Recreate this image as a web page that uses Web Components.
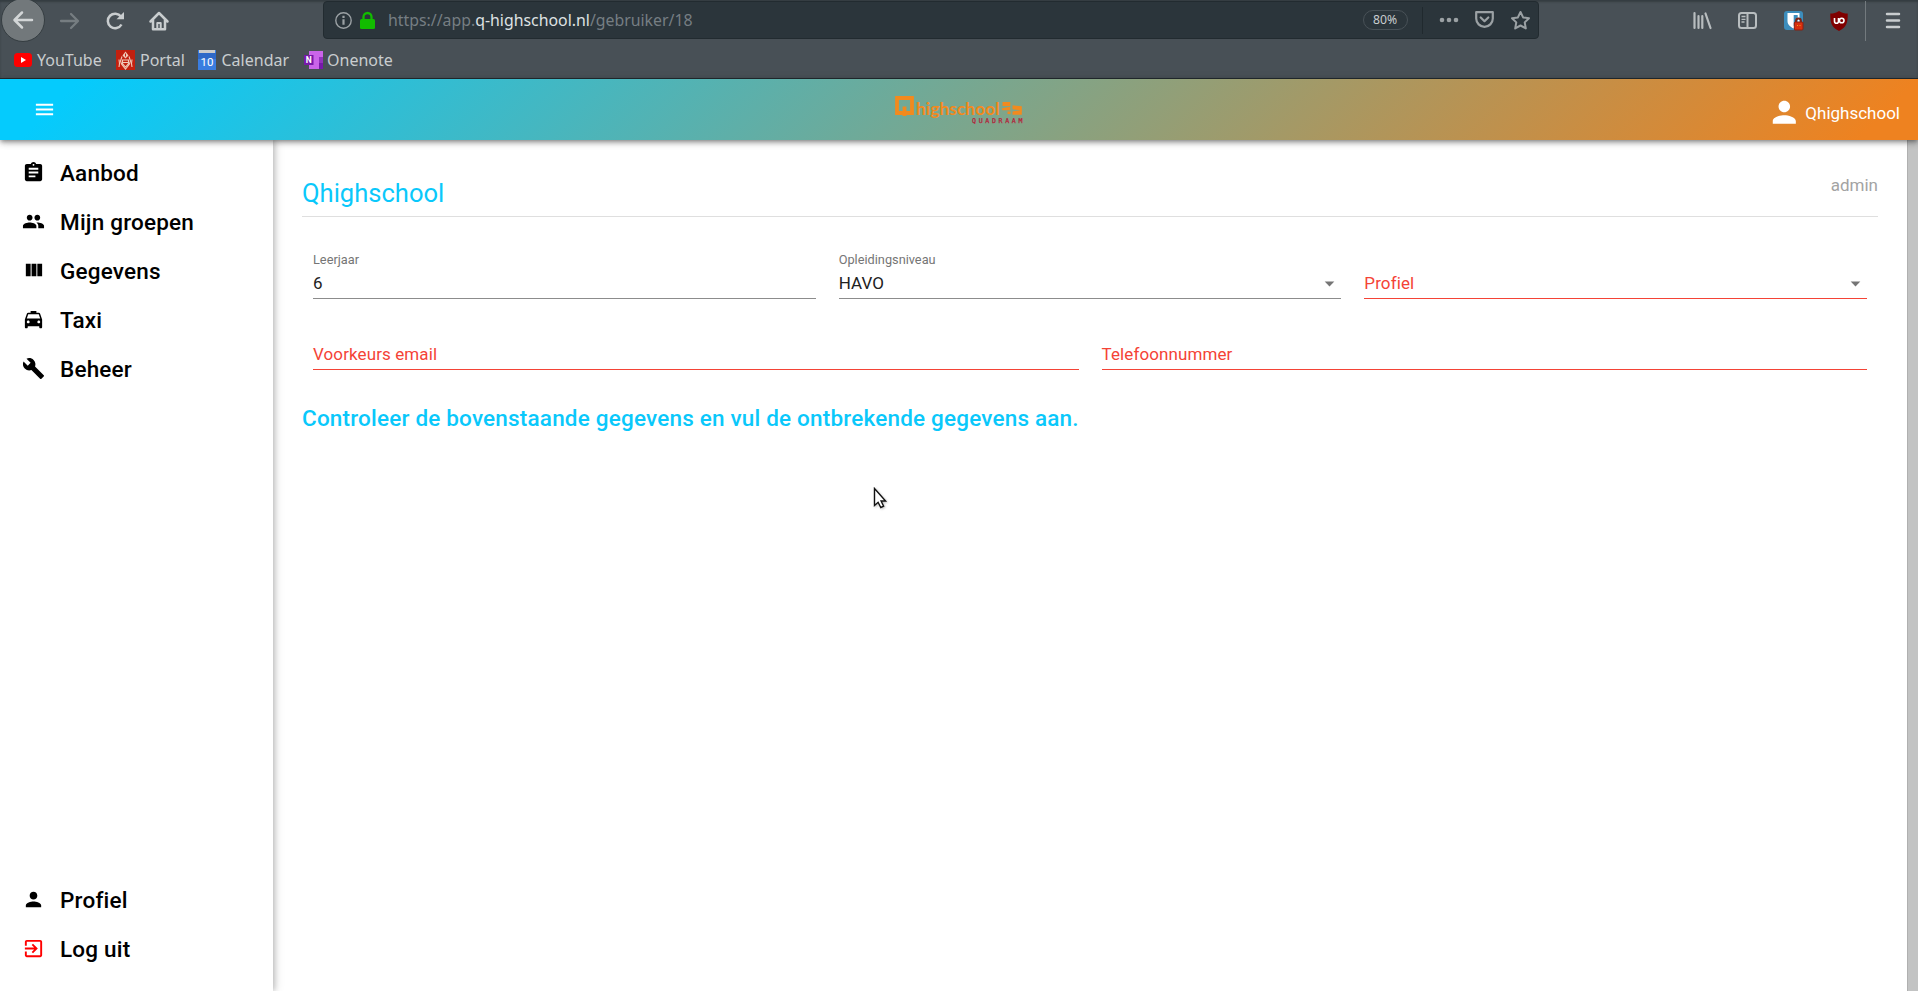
<!DOCTYPE html>
<html lang="nl">
<head>
<meta charset="utf-8">
<title>Qhighschool</title>
<style>
html,body{margin:0;height:100%;overflow:hidden;background:#fff}
body{font-family:Roboto,"Liberation Sans",sans-serif}
</style>
</head>
<body>
<qh-window></qh-window>
<script>
const define = (name, html) => customElements.define(name, class extends HTMLElement {
  connectedCallback() {
    if (this.shadowRoot) return;
    const t = document.createElement('template');
    t.innerHTML = typeof html === 'function' ? html(this) : html;
    this.attachShadow({mode: 'open'}).append(t.content.cloneNode(true));
  }
});

// Material glyphs on a 24-unit grid
const glyphs = {
  menu: 'M3 18h18v-2H3v2zm0-5h18v-2H3v2zm0-7v2h18V6H3z',
  person: 'M12 12c2.21 0 4-1.79 4-4s-1.79-4-4-4-4 1.79-4 4 1.79 4 4 4zm0 2c-2.67 0-8 1.34-8 4v2h16v-2c0-2.66-5.33-4-8-4z',
  assignment: 'M19 3h-4.18C14.4 1.84 13.3 1 12 1c-1.3 0-2.4.84-2.82 2H5c-1.1 0-2 .9-2 2v14c0 1.1.9 2 2 2h14c1.1 0 2-.9 2-2V5c0-1.1-.9-2-2-2zm-7 0c.55 0 1 .45 1 1s-.45 1-1 1-1-.45-1-1 .45-1 1-1zm2 14H7v-2h7v2zm3-4H7v-2h10v2zm0-4H7V7h10v2z',
  group: 'M16 11c1.66 0 2.99-1.34 2.99-3S17.66 5 16 5c-1.66 0-3 1.34-3 3s1.34 3 3 3zm-8 0c1.66 0 2.99-1.34 2.99-3S9.66 5 8 5C6.34 5 5 6.34 5 8s1.34 3 3 3zm0 2c-2.33 0-7 1.17-7 3.5V19h14v-2.500c0-2.330-4.670-3.500-7-3.500zm8 0c-.29 0-.62.020-.97.050 1.160.840 1.970 1.970 1.970 3.450V19h6v-2.500c0-2.330-4.670-3.500-7-3.500z',
  columns: 'M10 18h5V5h-5v13zm-6 0h5V5H4v13zM16 5v13h5V5h-5z',
  taxi: 'M18.920 6.010C18.720 5.420 18.160 5 17.500 5H15V3H9v2H6.500c-.66 0-1.210.420-1.420 1.010L3 12v8c0 .55.45 1 1 1h1c.55 0 1-.45 1-1v-1h12v1c0 .55.45 1 1 1h1c.55 0 1-.45 1-1v-8l-2.080-5.990zM6.500 16c-.83 0-1.500-.67-1.500-1.500S5.670 13 6.500 13s1.500.67 1.500 1.500S7.330 16 6.500 16zm11 0c-.83 0-1.500-.67-1.500-1.500s.67-1.500 1.500-1.500 1.500.67 1.500 1.500-.67 1.500-1.500 1.500zM5 11l1.500-4.500h11L19 11H5z',
  wrench: 'M22.700 19l-9.100-9.100c.9-2.300.4-5-1.500-6.900-2-2-5-2.400-7.400-1.300L9 6 6 9 1.600 4.700C.4 7.100.9 10.100 2.900 12.100c1.900 1.900 4.600 2.400 6.900 1.500l9.100 9.100c.4.4 1 .4 1.400 0l2.300-2.300c.5-.4.5-1.100.1-1.400z',
  exit: 'M10.090 15.590L11.500 17l5-5-5-5-1.410 1.410L12.670 11H3v2h9.670l-2.580 2.590zM19 3H5c-1.110 0-2 .9-2 2v4h2V5h14v14H5v-4H3v4c0 1.100.89 2 2 2h14c1.100 0 2-.9 2-2V5c0-1.100-.9-2-2-2z',
  drop: 'M7 10l5 5 5-5z'
};
define('qh-icon', el => `<style>:host{display:block;flex:none}svg{display:block}</style>
<svg width="${el.getAttribute('size')||23}" height="${el.getAttribute('size')||23}" viewBox="0 0 24 24" fill="currentColor"><path d="${glyphs[el.getAttribute('name')]}"/></svg>`);

define('qh-bookmark', el => `<style>:host{display:flex;align-items:center;font:16px/24px "Noto Sans",sans-serif;color:#c9cdcf;width:${el.getAttribute('w')}px}
.i{display:flex;flex:none;width:${el.getAttribute('gap')||23}px}</style><span class="i"><slot name="icon"></slot></span><slot></slot>`);

define('browser-chrome', `<style>
:host{display:flex;flex-direction:column;height:79px;box-sizing:border-box;background:#485056;border-bottom:1px solid #232b30;box-shadow:inset 0 2px 2px #353d42;font-family:"Noto Sans",sans-serif;overflow:hidden}
svg{display:block;overflow:visible;flex:none}
.bar{display:flex;height:41px;align-items:center;box-sizing:border-box}
.back{width:44px;height:44px;flex:none;box-sizing:border-box;border:1px solid #353d41;border-radius:50%;background:#72787b;margin:-2px -10px 0 1px;display:flex;align-items:center;justify-content:center}
.nav{display:flex;align-items:center;width:323px;flex:none;gap:25px}
.url{width:1216px;flex:none;height:38px;margin-top:-1px;box-sizing:border-box;border:1px solid #222b30;border-radius:4px;background:#2b353b;display:flex;align-items:center;color:#767e83;font-size:15.850px;padding-left:11px;white-space:nowrap}
.url b{font-weight:400;color:#dfe2e3}
.text{margin-left:13px;flex:1;line-height:24px}
.zoom{width:45px;height:20px;box-sizing:border-box;border:1px solid #485157;border-radius:10px;font-size:12.200px;line-height:18px;text-align:center;color:#c9cdcf}
.sep{width:1px;height:27px;background:#20292e;margin:0 16px 0 14px}
.tools{flex:1;display:flex;align-items:center;padding-left:154px}
.sep2{width:1px;height:40px;background:#737a7e;margin:0 20px 0 17px}
.marks{display:flex;align-items:center;height:37px;padding:1px 0 0 14px;box-sizing:border-box}
</style>
<div class="bar">
 <div class="nav"><div class="back"><svg width="20" height="18" viewBox="0 0 20 18" fill="none" stroke="#d3d6d7" stroke-width="2.500" stroke-linecap="round" stroke-linejoin="round"><path d="M9 1.500L1.500 9 9 16.500M2 9h17"/></svg></div>
 <svg width="19" height="16" viewBox="0 0 19 16" fill="none" stroke="#767d81" stroke-width="2.300" stroke-linecap="round" stroke-linejoin="round"><path d="M11 1l7 7-7 7M17 8H1"/></svg>
 <svg style="margin-left:2px" width="18" height="18" viewBox="0 0 18 18" fill="none" stroke="#c9cdcf" stroke-width="2.500"><path d="M15.500 12.500A7.300 7.300 0 1 1 15 4.600"/><path d="M10.500 7.300H18V0z" fill="#c9cdcf" stroke="none"/></svg>
 <svg width="20" height="20" viewBox="0 0 20 20" fill="none" stroke="#c9cdcf" stroke-width="2.500" stroke-linejoin="round" stroke-linecap="round"><path d="M1.500 10.500L10 2l8.500 8.500M4 9v9.200h12V9"/><path d="M8.300 18v-6h3.400v6" stroke-width="2"/></svg></div>
 <div class="url">
  <svg width="17" height="17" viewBox="0 0 17 17"><circle cx="8.500" cy="8.500" r="7.700" fill="none" stroke="#9ba1a4" stroke-width="1.400"/><path d="M7.400 3.800h2.200V6H7.400zm0 3.500h2.200v5.400H7.400z" fill="#9ba1a4"/></svg>
  <svg style="margin-left:8px" width="15" height="17" viewBox="0 0 15 17"><path d="M3.500 8V5a4 4 0 0 1 8 0v3" fill="none" stroke="#12bc00" stroke-width="2.300"/><rect y="7" width="15" height="10" rx="1.500" fill="#12bc00"/></svg>
  <span class="text">https://app.<b>q-highschool.nl</b>/gebruiker/18</span>
  <span class="zoom">80%</span><span class="sep"></span>
  <svg width="20" height="6" viewBox="0 0 20 6" fill="#9ba1a4"><circle cx="3" cy="3" r="2.300"/><circle cx="10" cy="3" r="2.300"/><circle cx="17" cy="3" r="2.300"/></svg>
  <svg style="margin-left:16px" width="19" height="18" viewBox="0 0 19 18" fill="none" stroke="#9ba1a4" stroke-width="2.200" stroke-linejoin="round" stroke-linecap="round"><path d="M1.200 1.200h16.600v6.300a8.300 8.300 0 0 1-16.600 0z"/><path d="M5.700 6.500l3.800 3.700 3.800-3.700"/></svg>
  <svg style="margin:0 8.500px 0 17px" width="19" height="19" viewBox="0 0 19 19" fill="none" stroke="#9ba1a4" stroke-width="2" stroke-linejoin="round"><path d="M9.500 1l2.600 5.400 5.900.8-4.300 4.200 1.100 6-5.300-2.900-5.300 2.900 1.100-6L1 7.200l5.900-.8z"/></svg>
 </div>
 <div class="tools">
  <svg width="19" height="17" viewBox="0 0 19 17" stroke="#b8bdbf" stroke-width="2.200" stroke-linecap="round"><path d="M1.500 1v15M5.500 4v12M9.300 4v12M12.500 1.500L17.500 16"/></svg>
  <svg style="margin-left:26px" width="19" height="17" viewBox="0 0 19 17" fill="none" stroke="#b8bdbf"><rect x="1" y="1" width="17" height="15" rx="2.500" stroke-width="2"/><path d="M9.500 1v15" stroke-width="2"/><path d="M3.500 4.500h4M3.500 7.300h4M3.500 10h3" stroke-width="1.300"/></svg>
  <svg style="margin-left:27px" width="19" height="19" viewBox="0 0 19 19"><rect width="19" height="19" rx="3" fill="#3c8dbc"/><path d="M3.500 2h12v8c0 4-3.500 6-6 7.500C7 16 3.500 14 3.500 10z" fill="#fff"/><path d="M9.700 4h4v6c0 2-2 3.800-4 5z" fill="#3c8dbc"/><path d="M12 12v-2a2.500 2.500 0 0 1 5 0v2" fill="none" stroke="#7a2516" stroke-width="1.800"/><rect x="10.300" y="11" width="8.700" height="8" rx="1" fill="#d9300f" stroke="#8a2010"/><path d="M13 14.500h1m1.500 0h1" stroke="#f0a020"/></svg>
  <svg style="margin-left:27px" width="18" height="20" viewBox="0 0 18 20"><path d="M9 0c3 2 5.500 2.500 8.700 2.500C18 11 16.500 16.500 9 20 1.500 16.500 0 11 .3 2.500 3.500 2.500 6 2 9 0z" fill="#800000"/><path d="M4.500 7v3.200a2 2 0 0 0 4 0V7" fill="none" stroke="#fff" stroke-width="1.600"/><circle cx="11.700" cy="9.500" r="2.300" fill="none" stroke="#fff" stroke-width="1.600"/></svg>
  <span class="sep2"></span>
  <svg width="14" height="17" viewBox="0 0 14 17" stroke="#c9cdcf" stroke-width="2.500" stroke-linecap="round"><path d="M1 2h12M1 8.500h12M1 15h12"/></svg>
 </div>
</div>
<div class="marks">
 <qh-bookmark w="102"><svg slot="icon" width="18" height="14" viewBox="0 0 18 14"><rect width="18" height="14" rx="3.500" fill="#f00"/><path d="M7 4l5 3-5 3z" fill="#fff"/></svg>YouTube</qh-bookmark>
 <qh-bookmark w="82" gap="24"><svg slot="icon" width="19" height="20" viewBox="0 0 19 20"><rect width="19" height="20" fill="#c2200f"/><path d="M9.500 1.500L12.500 5.500 9.500 8.500 6.500 5.500z" fill="#f0c9b8"/><path d="M9.500 3.500v3" stroke="#c2200f"/><path d="M6 6.500l-1.500 4.500 1 3 4 5 4-5 1-3L13 6.500M3 9.500l.5 4L3 17M16 9.500l-.5 4 .5 3.500M6.500 10h6v3.500l-3 3.500-3-3.500zM6.500 12.500h6" fill="none" stroke="#f0c9b8" stroke-width="1.100"/></svg>Portal</qh-bookmark>
 <qh-bookmark w="106" gap="23.500"><svg slot="icon" width="18" height="20" viewBox="0 0 18 20"><rect width="18" height="20" fill="#3a7de0"/><path d="M0 3h18v6H0z" fill="#2f69c8"/><path d="M1 0h16v3H1z" fill="#ccc"/><text x="9" y="15.500" font-family="Roboto" font-size="11.500" text-anchor="middle" fill="#fff">10</text></svg>Calendar</qh-bookmark>
 <qh-bookmark w="100"><svg slot="icon" width="19" height="18" viewBox="0 0 19 18"><rect x="5" width="14" height="18" fill="#ca64ea"/><path d="M15 6h4v6h-4z" fill="#9332bf"/><path d="M15 12h4v6h-4z" fill="#7719aa"/><rect y="4" width="9.500" height="10" fill="#7719aa"/><text x="4.800" y="12" font-family="Roboto" font-weight="700" font-size="8.500" text-anchor="middle" fill="#fff">N</text></svg>Onenote</qh-bookmark>
</div>`);

define('qh-logo', `<style>:host{display:block}svg{display:block;overflow:visible}</style>
<svg width="128" height="28" viewBox="0 0 128 28">
<path d="M2 2h15v15H2zM9.500 10.500V20" fill="none" stroke="#f28a1e" stroke-width="3.800"/>
<text x="21" y="18.700" font-family="Lato" font-weight="700" font-size="17.800" textLength="83.500" lengthAdjust="spacingAndGlyphs" fill="#f28a1e">highschool</text>
<path d="M107.500 6h7.800v4h-7.800zM107 12.200l8.200-1.500v3.500h-8zM112.500 15.500h3V18h-3zM117.500 9.300l9.300 1v4l-9.300-1zM117.500 15.500l9.300-1.500v4.800h-9.300z" fill="#f28a1e"/>
<text x="77" y="27.200" font-family="DejaVu Sans Mono" font-size="6.600" textLength="50.500" lengthAdjust="spacing" fill="#b5213a" stroke="#b5213a" stroke-width=".25">QUADRAAM</text>
</svg>`);

define('qh-header', `<style>
:host{display:grid;grid-template-columns:1fr 128px 1fr;height:61px;position:relative;z-index:3;background:linear-gradient(135deg,#05cbfd 4%,#ee8220 97%);box-shadow:0 2px 4px -1px rgba(0,0,0,.3),0 3px 6px rgba(0,0,0,.22),0 1px 9px rgba(0,0,0,.12);color:#fff}
.l{padding:19px 0 0 33px}.m{padding-top:17px}
.r{display:flex;justify-content:flex-end;gap:4px;padding-right:18px;font-size:17px;line-height:35px;padding-top:16px}
.r span{padding-top:1px}
</style><div class="l"><qh-icon name="menu"></qh-icon></div><div class="m"><qh-logo></qh-logo></div>
<div class="r"><qh-icon name="person" size="34.600"></qh-icon><span>Qhighschool</span></div>`);

define('nav-item', el => `<style>:host{display:flex;align-items:center;height:49px;padding-left:21.500px;gap:15.500px;font-weight:500;font-size:22.500px;letter-spacing:.2px;line-height:30px;color:#000}
qh-icon{color:${el.getAttribute('tint')||'#000'}}</style><qh-icon name="${el.getAttribute('icon')}"></qh-icon><span><slot></slot></span>`);

define('side-nav', `<style>:host{display:flex;flex-direction:column;justify-content:space-between;width:273px;box-sizing:border-box;flex:none;padding:8px 0 18px;background:#fff;position:relative;z-index:2;box-shadow:2px 0 5px rgba(0,0,0,.16),2px 0 10px rgba(0,0,0,.14)}</style>
<div><nav-item icon="assignment">Aanbod</nav-item><nav-item icon="group">Mijn groepen</nav-item><nav-item icon="columns">Gegevens</nav-item><nav-item icon="taxi">Taxi</nav-item><nav-item icon="wrench">Beheer</nav-item></div>
<div><nav-item icon="person">Profiel</nav-item><nav-item icon="exit" tint="#f00">Log uit</nav-item></div>`);

define('text-field', el => {
  const err = el.hasAttribute('error'), sel = el.hasAttribute('select'), label = el.getAttribute('label');
  return `<style>:host{display:flex;flex-direction:column;flex:1 1 0;height:48px;border-bottom:1px solid ${err?'#f44336':'#8c8c8c'}}
.l{font-size:12.750px;line-height:16px;height:20px;color:#757575;padding-top:2px;box-sizing:border-box}
.v{display:flex;justify-content:space-between;align-items:center;font-size:17px;line-height:24px;height:26px;color:${err?'#f44336':'#212121'};letter-spacing:${err?'.1px':'.05px'}}
qh-icon{color:#757575}</style><div class="l">${err?'':label}</div><div class="v"><span>${err?label:'<slot></slot>'}</span>${sel?'<qh-icon name="drop" size="23"></qh-icon>':''}</div>`;
});

define('profile-form', `<style>
:host{display:block;flex:1;padding:0 29px 0 29px}
.head{display:flex;justify-content:space-between;height:76px;border-bottom:1px solid #dfdfdf;color:#0ac8fb}
h1{margin:37px 0 0;font-weight:400;font-size:25.550px;line-height:32px}
.role{font-size:17px;line-height:24px;margin-top:33px;color:#a3a3a3}
.row{display:flex;gap:23px;padding:0 11px}.a{padding-top:33px}.b{padding-top:22px}
h2{margin:33px 0 0;font-weight:500;font-size:22.500px;letter-spacing:.19px;line-height:30px;color:#0ac8fb}
</style>
<div class="head"><h1>Qhighschool</h1><span class="role">admin</span></div>
<div class="row a"><text-field label="Leerjaar">6</text-field><text-field label="Opleidingsniveau" select>HAVO</text-field><text-field label="Profiel" select error></text-field></div>
<div class="row b"><text-field label="Voorkeurs email" error></text-field><text-field label="Telefoonnummer" error></text-field></div>
<h2>Controleer de bovenstaande gegevens en vul de ontbrekende gegevens aan.</h2>`);

define('mouse-pointer', `<style>:host{display:block;position:absolute;left:873px;top:487px;z-index:5}svg{display:block;filter:drop-shadow(1px 1px 1px rgba(0,0,0,.25))}</style>
<svg width="15" height="22" viewBox="0 0 15 22"><path d="M1.500 1.500v17l3.600-3.200 2.700 5.200 2.800-1.400-2.500-5.100H12.600z" fill="#fff" stroke="#111" stroke-width="1.400"/></svg>`);

define('qh-window', `<style>
:host{display:flex;flex-direction:column;height:991px;overflow:hidden;background:#fff}
.main{display:flex;flex:1}.track{width:11px;background:#c2c3c3;border-left:1px solid #b0b0b0;box-sizing:border-box}
</style><browser-chrome></browser-chrome><qh-header></qh-header>
<div class="main"><side-nav></side-nav><profile-form></profile-form><div class="track"></div></div><mouse-pointer></mouse-pointer>`);
</script>
</body>
</html>
